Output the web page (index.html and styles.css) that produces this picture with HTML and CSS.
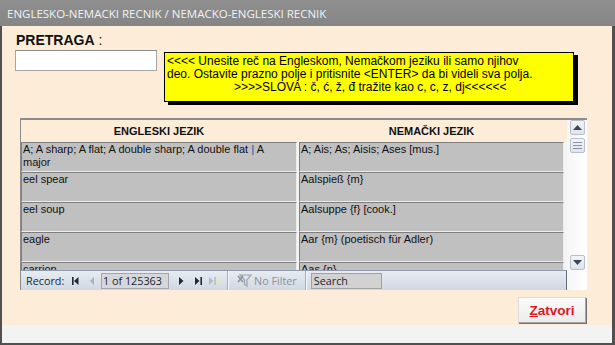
FILE: index.html
```html
<!DOCTYPE html>
<html lang="sr">
<head>
  <meta charset="UTF-8">
  <title>Recnik</title>
  <link rel="stylesheet" href="styles.css">
</head>
<body>
  <div class="window">
    <div class="titlebar">ENGLESKO-NEMACKI RECNIK / NEMACKO-ENGLESKI RECNIK</div>

    <div class="form">
      <div class="search-label"><b>PRETRAGA</b> :</div>

      <div class="search-row">
        <input type="text" class="search-input">
        <div class="hint">
          <div>&lt;&lt;&lt;&lt; Unesite reč na Engleskom, Nemačkom jeziku ili samo njihov</div>
          <div>deo. Ostavite prazno polje i pritisnite &lt;ENTER&gt; da bi videli sva polja.</div>
          <div class="hint-last">&gt;&gt;&gt;&gt;SLOVA : č, ć, ž, đ tražite kao c, c, z, dj&lt;&lt;&lt;&lt;&lt;&lt;</div>
        </div>
      </div>

      <!-- podforma sa recima -->
      <div class="sheet">
        <div class="sheet-main">
          <div class="sheet-body">
            <div class="sheet-head">
              <div>ENGLESKI JEZIK</div>
              <div>NEMAČKI JEZIK</div>
            </div>
            <div class="sheet-row">
              <div class="cell">A; A sharp; A flat; A double sharp; A double flat <span class="bar">|</span> A<br>major</div>
              <div class="cell">A; Ais; As; Aisis; Ases [mus.]</div>
            </div>
            <div class="sheet-row">
              <div class="cell">eel spear</div>
              <div class="cell">Aalspieß {m}</div>
            </div>
            <div class="sheet-row">
              <div class="cell">eel soup</div>
              <div class="cell">Aalsuppe {f} [cook.]</div>
            </div>
            <div class="sheet-row">
              <div class="cell">eagle</div>
              <div class="cell">Aar {m} (poetisch für Adler)</div>
            </div>
            <div class="sheet-row">
              <div class="cell">carrion</div>
              <div class="cell">Aas {n}</div>
            </div>
          </div>

          <div class="navbar">
            <span class="nav-label">Record:</span>
            <svg class="nav-first" width="7" height="8" viewBox="0 0 7 8"><rect x="0" y="0" width="1.6" height="8" fill="#1f2a38"/><polygon points="6.5,0 6.5,8 2,4" fill="#1f2a38"/></svg>
            <svg class="nav-prev" width="4" height="8" viewBox="0 0 4 8"><polygon points="4,0 4,8 0,4" fill="#a9b1bd"/></svg>
            <span class="nav-box">1 of 125363</span>
            <svg class="nav-next" width="5" height="8" viewBox="0 0 5 8"><polygon points="0,0 0,8 4.5,4" fill="#1f2a38"/></svg>
            <svg class="nav-last" width="7" height="8" viewBox="0 0 7 8"><polygon points="0,0 0,8 4.5,4" fill="#1f2a38"/><rect x="5.4" y="0" width="1.6" height="8" fill="#1f2a38"/></svg>
            <svg class="nav-new" width="12" height="8" viewBox="0 0 12 8"><polygon points="0,0 0,8 4.5,4" fill="#b4bbc6"/><rect x="5.4" y="0" width="1.4" height="8" fill="#b4bbc6"/><polygon points="9.5,1 10.3,3.2 12,3.4 10.7,4.6 11.2,6.6 9.5,5.5 7.8,6.6 8.3,4.6 7,3.4 8.7,3.2" fill="#f1e6a8"/></svg>
            <span class="nav-sep"></span>
            <svg class="nav-filter" width="15" height="13" viewBox="0 0 15 13"><polygon points="3,1 14,1 10,6 10,12 7.5,10.5 7.5,6" fill="none" stroke="#9aa1ab" stroke-width="1.2"/><path d="M1 2 L6 8 M6 2 L1 8" stroke="#8e949d" stroke-width="1.6"/></svg>
            <span class="nav-nofilter">No Filter</span>
            <span class="nav-sep nav-sep2"></span>
            <span class="nav-search">Search</span>
          </div>
        </div>

        <div class="vscroll">
          <div class="vs-btn">
            <svg width="9" height="5" viewBox="0 0 9 5"><polygon points="0,5 9,5 4.5,0" fill="#3d4656"/></svg>
          </div>
          <div class="vs-thumb">
            <svg width="9" height="7" viewBox="0 0 9 7"><path d="M0 0.5 H9 M0 3.5 H9 M0 6.5 H9" stroke="#8a93a2" stroke-width="1"/></svg>
          </div>
          <div class="vs-space"></div>
          <div class="vs-btn">
            <svg width="9" height="5" viewBox="0 0 9 5"><polygon points="0,0 9,0 4.5,5" fill="#3d4656"/></svg>
          </div>
        </div>
      </div>

      <div class="actions">
        <button class="close-btn"><u>Z</u>atvori</button>
      </div>
    </div>

    <div class="statusbar"></div>
  </div>
</body>
</html>
```

FILE: styles.css
```css
* {
  box-sizing: border-box;
}

body {
  margin: 0;
  background: #ffffff;
  font-family: "Liberation Sans", Arial, sans-serif;
}

.window {
  width: 615px;
  height: 345px;
  display: flex;
  flex-direction: column;
  background: #fdecd8;
  border-left: 2px solid #505050;
  border-right: 3px solid #505050;
  border-bottom: 2px solid #505050;
}

.titlebar {
  height: 26px;
  margin: 0 -3px 0 -2px;
  padding-left: 7px;
  background: linear-gradient(#8f8f8f, #858585);
  color: #f2f2f2;
  font-family: "Open Sans", sans-serif;
  font-size: 11.5px;
  line-height: 27px;
  white-space: nowrap;
}

.form {
  height: 299px;
  padding: 6px 0 0 13px;
}

.search-label {
  padding-left: 1px;
  font-size: 14px;
  line-height: 16px;
  color: #111;
}

.search-row {
  display: flex;
  align-items: flex-start;
  margin-top: 2px;
}

.search-input {
  width: 142px;
  height: 21px;
  margin: 0;
  background: #fff;
  border: 1px solid #a5a5a5;
  border-top-color: #8a8a8a;
}

.hint {
  width: 410px;
  height: 50px;
  margin: 2px 0 0 7px;
  padding: 2px 0 0 2px;
  background: #ffff00;
  border: 1px solid #000;
  box-shadow: 4px 3px 0 #000;
  font-size: 12px;
  line-height: 13px;
  color: #000;
  white-space: nowrap;
}

.hint-last {
  padding-left: 67px;
}

/* datasheet */
.sheet {
  display: flex;
  width: 567px;
  height: 172px;
  margin: 16px 0 0 5px;
  border-top: 2px solid #8c8c8c;
  border-left: 1px solid #8c8c8c;
  background: #fafafa;
}

.sheet-main {
  flex: 1;
  display: flex;
  flex-direction: column;
}

.sheet-body {
  height: 150px;
  overflow: hidden;
  background: #f4f4f4;
}

.sheet-head,
.sheet-row {
  display: grid;
  grid-template-columns: 276px 265px;
  column-gap: 2px;
}

.sheet-head {
  height: 22px;
  background: #fdecd8;
  font-size: 11px;
  font-weight: bold;
  line-height: 22px;
  text-align: center;
  color: #111;
}

.sheet-row {
  height: 30px;
}

.cell {
  padding: 0 1px;
  background: #c0c0c0;
  border-top: 1px solid #7e7e7e;
  border-left: 1px solid #7e7e7e;
  border-right: 1px solid #ececec;
  border-bottom: 1px solid #ececec;
  font-size: 11px;
  line-height: 13px;
  color: #111;
  overflow: hidden;
}

.bar {
  color: #5a78a6;
  font-weight: bold;
}

.navbar {
  height: 20px;
  display: flex;
  align-items: center;
  padding-left: 5px;
  background: linear-gradient(#e7ecf2, #d0d8e3);
  border-top: 1px solid #8f9aab;
  border-right: 1px solid #67707e;
  font-family: "Open Sans", sans-serif;
  font-size: 10.8px;
  color: #1c2634;
}

.nav-label {
  width: 38px;
}

.nav-first {
  margin-left: 8px;
}

.nav-prev {
  margin-left: 11px;
}

.nav-box {
  width: 68px;
  height: 16px;
  margin-left: 7px;
  padding-left: 1px;
  background: #d5d7da;
  border: 1px solid #a2a6ac;
  line-height: 14px;
}

.nav-next {
  margin-left: 10px;
}

.nav-last {
  margin-left: 11px;
}

.nav-new {
  margin-left: 7px;
}

.nav-sep {
  width: 2px;
  height: 19px;
  margin-left: 6px;
  border-left: 1px solid #a3adbb;
  border-right: 1px solid #f4f6f9;
}

.nav-filter {
  margin-left: 8px;
}

.nav-nofilter {
  margin-left: 2px;
  color: #8b9099;
}

.nav-sep2 {
  margin-left: 8px;
}

.nav-search {
  width: 71px;
  height: 16px;
  margin-left: 4px;
  padding-left: 2px;
  background: #d2d2d2;
  border: 1px solid #9ea2a8;
  line-height: 14px;
}

.vscroll {
  width: 20px;
  display: flex;
  flex-direction: column;
  align-items: center;
  background: linear-gradient(90deg, #f6f6f6, #ffffff);
}

.vs-btn,
.vs-thumb {
  width: 15px;
  height: 15px;
  display: flex;
  align-items: center;
  justify-content: center;
  background: linear-gradient(#f2f4f8, #dfe4ec);
  border: 1px solid #b9c0cb;
  border-radius: 2px;
}

.vs-thumb {
  margin-top: 3px;
}

.vs-space {
  flex: 1;
}

.vs-btn:last-child {
  margin-bottom: 20px;
}

.actions {
  display: flex;
  justify-content: flex-end;
  margin: 7px 26px 0 0;
}

.close-btn {
  width: 68px;
  height: 26px;
  padding: 0;
  background: linear-gradient(#fbfbfb, #ececec);
  border: 1px solid #a8a8a8;
  border-top-color: #dcdcdc;
  border-left-color: #dcdcdc;
  box-shadow: 1px 1px 0 #707070;
  font-family: "Liberation Sans", Arial, sans-serif;
  font-size: 13.5px;
  font-weight: bold;
  color: #e5141c;
}

.statusbar {
  height: 18px;
  background: #f3f3f3;
}
```
